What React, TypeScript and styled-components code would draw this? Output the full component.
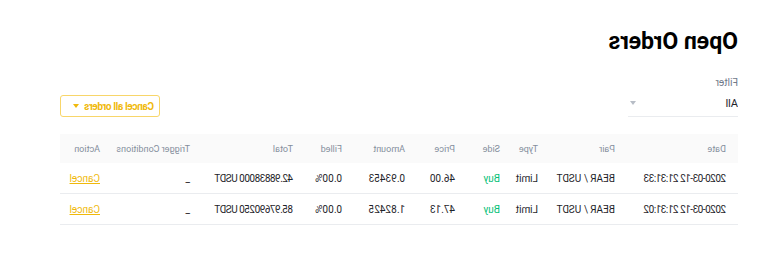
import styled, { createGlobalStyle } from 'styled-components';

const GlobalStyle = createGlobalStyle`
  body {
    margin: 0;
    background: #ffffff;
    font-family: Roboto, "Liberation Sans", Arial, sans-serif;
  }
`;

type Order = {
  date: string;
  pair: string;
  type: string;
  side: string;
  price: string;
  amount: string;
  filled: string;
  total: string;
  trigger: string;
};

const orders: Order[] = [
  {
    date: '2020-03-12 21:31:33',
    pair: 'BEAR / USDT',
    type: 'Limit',
    side: 'Buy',
    price: '46.00',
    amount: '0.93453',
    filled: '0.00%',
    total: '42.98838000 USDT',
    trigger: '_',
  },
  {
    date: '2020-03-12 21:31:02',
    pair: 'BEAR / USDT',
    type: 'Limit',
    side: 'Buy',
    price: '47.13',
    amount: '1.82425',
    filled: '0.00%',
    total: '85.97690250 USDT',
    trigger: '_',
  },
];

const columns = ['Date', 'Pair', 'Type', 'Side', 'Price', 'Amount', 'Filled', 'Total', 'Trigger Conditions', 'Action'];

const App = () => {
  return (
    <>
      <GlobalStyle />
      <Page>
        <Title>Open Orders</Title>

        <Toolbar>
          <Filter>
            <FilterLabel>Filter</FilterLabel>
            <Select>
              <span>All</span>
              <Caret color="#b7bdc6" />
            </Select>
          </Filter>
          <CancelAllButton>
            Cancel all orders
            <Caret color="#f0b90b" />
          </CancelAllButton>
        </Toolbar>

        <Table>
          <HeaderRow>
            {columns.map((c) => (
              <HeaderCell key={c}>{c}</HeaderCell>
            ))}
          </HeaderRow>
          {orders.map((o) => (
            <Row key={o.date}>
              <Cell $tight>{o.date}</Cell>
              <Cell>{o.pair}</Cell>
              <Cell>{o.type}</Cell>
              <Cell $buy={o.side === 'Buy'}>{o.side}</Cell>
              <Cell>{o.price}</Cell>
              <Cell>{o.amount}</Cell>
              <Cell>{o.filled}</Cell>
              <Cell $tight>{o.total}</Cell>
              <Cell>{o.trigger}</Cell>
              <Cell>
                <CancelLink href="#">Cancel</CancelLink>
              </Cell>
            </Row>
          ))}
        </Table>
      </Page>
    </>
  );
};

export default App;

// Styled Components
const Page = styled.div`
  width: 758px;
  height: 268px;
  box-sizing: border-box;
  padding: 29px 60px 0 20px;
  transform: scaleX(-1);
  overflow: hidden;
`;

const Title = styled.h1`
  margin: 0;
  font-size: 23px;
  line-height: 26px;
  font-weight: 700;
  color: #000000;
`;

const Toolbar = styled.div`
  display: flex;
  justify-content: space-between;
  align-items: flex-end;
  margin-top: 21px;
`;

const Filter = styled.div`
  display: flex;
  flex-direction: column;
  width: 110px;
`;

const FilterLabel = styled.div`
  font-size: 10px;
  line-height: 14px;
  color: #707a8a;
`;

const Select = styled.div`
  display: flex;
  align-items: center;
  justify-content: space-between;
  height: 26px;
  padding-right: 2px;
  border-bottom: 1px solid #eaecef;
  font-size: 11px;
  color: #1e2329;
`;

const Caret = styled.span<{ color: string }>`
  width: 0;
  height: 0;
  border-left: 3.5px solid transparent;
  border-right: 3.5px solid transparent;
  border-top: 4px solid ${(p) => p.color};
`;

const CancelAllButton = styled.button`
  display: flex;
  align-items: center;
  gap: 6px;
  width: 100px;
  height: 22px;
  box-sizing: border-box;
  padding: 0 0 0 5px;
  background: #ffffff;
  border: 1px solid #f8d66a;
  border-radius: 3px;
  font-family: inherit;
  font-size: 10px;
  font-weight: 700;
  color: #f0b90b;
  letter-spacing: -0.35px;
  white-space: nowrap;
`;

const Table = styled.div`
  margin-top: 17px;
  width: 678px;
`;

const gridColumns = '111px 77px 38px 45px 50px 63px 49px 103px 90px 52px';

const HeaderRow = styled.div`
  display: grid;
  grid-template-columns: ${gridColumns};
  align-items: center;
  height: 29px;
  background: #fafafa;
`;

const HeaderCell = styled.div`
  padding-left: 12px;
  font-size: 9px;
  color: #848e9c;
  white-space: nowrap;
`;

const Row = styled.div`
  display: grid;
  grid-template-columns: ${gridColumns};
  align-items: center;
  height: 31px;
  box-sizing: border-box;
  border-bottom: 1px solid #eaecef;
`;

const Cell = styled.div<{ $buy?: boolean; $tight?: boolean }>`
  padding-left: 12px;
  font-size: 10px;
  letter-spacing: ${(p) => (p.$tight ? '-0.5px' : '0')};
  color: ${(p) => (p.$buy ? '#02c076' : '#1e2329')};
  white-space: nowrap;
`;

const CancelLink = styled.a`
  color: #f0b90b;
  text-decoration: underline;
`;
